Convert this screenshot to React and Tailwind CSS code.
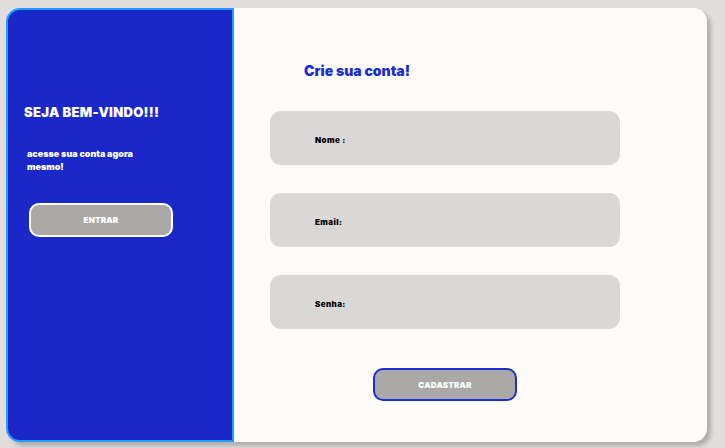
import React from "react";

const font = { fontFamily: "Inter, 'Noto Sans', sans-serif" };

function Field({ label }) {
  return (
    <div className="flex h-[54px] w-[350px] items-center rounded-[11px] bg-[#d9d8d7] pl-[45px] pt-[4px]">
      <span className="text-[8px] font-black tracking-[0.4px] text-black">{label}</span>
    </div>
  );
}

export default function App() {
  return (
    <div
      className="h-[448px] w-[725px] bg-[#e2dedd] pl-[6px] pt-[8px]"
      style={font}
    >
      <div className="flex h-[434px] w-[701px] rounded-[14px] shadow-[4px_4px_4px_rgba(0,0,0,0.22)]">
        {/* lado azul */}
        <div className="flex w-[228px] flex-col rounded-l-[14px] border-2 border-[#1f9cff] bg-[#1b28c9] pl-[16px] pt-[93px]">
          <h1 className="text-[13px] font-black leading-[18px] tracking-[0.3px] text-white">
            SEJA BEM-VINDO!!!
          </h1>
          <p className="ml-[3px] mt-[26px] text-[9px] font-black leading-[13px] text-white">
            acesse sua conta agora
            <br />
            mesmo!
          </p>
          <button className="ml-[5px] mt-[30px] h-[34px] w-[144px] rounded-[10px] border-2 border-white bg-[#aaa9a8] text-[8px] font-black tracking-[0.2px] text-white">
            ENTRAR
          </button>
        </div>

        {/* formulario */}
        <div className="flex flex-1 flex-col rounded-r-[14px] bg-[#fdfcfb] pl-[36px] pt-[53px]">
          <h2 className="ml-[34px] text-[14px] font-black leading-[20px] text-[#1b2fd0]">
            Crie sua conta!
          </h2>
          <div className="mt-[30px] flex flex-col gap-[28px]">
            <Field label="Nome :" />
            <Field label="Email:" />
            <Field label="Senha:" />
          </div>
          <button className="ml-[103px] mt-[39px] h-[33px] w-[144px] rounded-[10px] border-2 border-[#1b2fd0] bg-[#aaa9a8] text-[8px] font-black tracking-[0.2px] text-white">
            CADASTRAR
          </button>
        </div>
      </div>
    </div>
  );
}
